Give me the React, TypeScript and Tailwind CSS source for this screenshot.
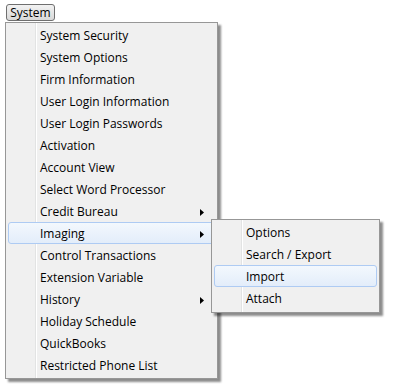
const mainItems = [
  { label: "System Security" },
  { label: "System Options" },
  { label: "Firm Information" },
  { label: "User Login Information" },
  { label: "User Login Passwords" },
  { label: "Activation" },
  { label: "Account View" },
  { label: "Select Word Processor" },
  { label: "Credit Bureau", sub: true },
  { label: "Imaging", sub: true, active: true },
  { label: "Control Transactions" },
  { label: "Extension Variable" },
  { label: "History", sub: true },
  { label: "Holiday Schedule" },
  { label: "QuickBooks" },
  { label: "Restricted Phone List" },
];

const imagingItems = [
  { label: "Options" },
  { label: "Search / Export" },
  { label: "Import", active: true },
  { label: "Attach" },
];

function Arrow() {
  return (
    <svg width="4" height="7" viewBox="0 0 4 7" className="absolute right-[10px] top-[8px]">
      <path d="M0 0 L4 3.5 L0 7 Z" fill="#000" />
    </svg>
  );
}

function MenuItem({ label, sub, active }: { label: string; sub?: boolean; active?: boolean }) {
  return (
    <div
      className={
        active
          ? "relative mx-[2px] h-[22px] pl-[31px] flex items-center rounded-[3px] border border-[#aecbf3] bg-gradient-to-b from-[#f3f8fd] to-[#e3edfa]"
          : "relative mx-[2px] h-[22px] pl-[31px] flex items-center border border-transparent"
      }
    >
      <span className="mt-[2px]">{label}</span>
      {sub && <Arrow />}
    </div>
  );
}

export default function App() {
  return (
    <div className="relative w-[394px] h-[390px] bg-white text-[12px] leading-none text-black font-['Open_Sans','Noto_Sans',sans-serif]">
      <div className="pt-[4px] pl-[6px]">
        <div className="w-[49px] h-[17px] flex items-center justify-center rounded-[3px] border border-[#6f6f6f] bg-gradient-to-b from-[#f2f2f2] to-[#d9d9d9]">
          <span className="mt-px">System</span>
        </div>
      </div>
      <div className="relative ml-[5px] mt-[1px] w-[213px] border border-[#979797] bg-[#f0f0f0] pt-[1px] pb-[2px] shadow-[3px_3px_2px_rgba(0,0,0,0.45)]">
        <div className="absolute left-[29px] top-0 bottom-0 w-[2px] border-l border-[#e2e3e3] bg-white" />
        {mainItems.map((it) => (
          <MenuItem key={it.label} label={it.label} sub={it.sub} active={it.active} />
        ))}
        <div className="absolute left-[205px] top-[196px] w-[169px] border border-[#979797] bg-[#f0f0f0] pt-[1px] pb-[3px] shadow-[3px_3px_2px_rgba(0,0,0,0.45)]">
          <div className="absolute left-[29px] top-0 bottom-0 w-[2px] border-l border-[#e2e3e3] bg-white" />
          {imagingItems.map((it) => (
            <MenuItem key={it.label} label={it.label} active={it.active} />
          ))}
        </div>
      </div>
    </div>
  );
}
